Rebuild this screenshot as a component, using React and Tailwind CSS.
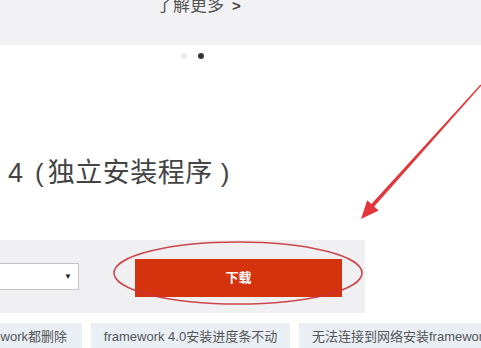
export default function App() {
  const font = { fontFamily: '"Liberation Sans", "Noto Sans CJK SC", sans-serif' }
  return (
    <div className="relative w-[481px] h-[348px] overflow-hidden bg-white" style={font}>
      {/* top band */}
      <div className="h-[45px] bg-[#f2f2f4] overflow-hidden">
        <div className="pl-[156px] -mt-[5px] flex items-center gap-[8px] text-[17px] text-[#555] leading-[22px]">
          <span>了解更多</span>
          <span className="text-[15px] font-bold text-[#444]">&gt;</span>
        </div>
      </div>

      {/* carousel dots */}
      <div className="flex gap-[11px] pl-[181px] mt-[8px]">
        <span className="w-[6px] h-[6px] rounded-full bg-[#ececf0]" />
        <span className="w-[6px] h-[6px] rounded-full bg-[#333]" />
      </div>

      {/* title */}
      <div className="pl-[8px] mt-[98px] flex items-baseline text-[27px] leading-[32px] text-[#444] whitespace-nowrap">
        <span>4</span>
        <span className="ml-[12px] text-[26px]">(</span>
        <span className="ml-[4px] tracking-[0.5px]">独立安装程序</span>
        <span className="ml-[8px] text-[26px]">)</span>
      </div>

      {/* download panel */}
      <div className="mt-[51px] w-[365px] h-[73px] bg-[#f0f0f2] flex items-start">
        <div className="mt-[23px] w-[79px] h-[27px] bg-white border border-l-0 border-[#c4c4c4] flex items-center justify-end pr-[6px]">
          <span className="text-[8px] text-[#222]">▼</span>
        </div>
        <button className="ml-[56px] mt-[19px] w-[207px] h-[38px] bg-[#d5330d] text-white text-[13px] font-bold flex items-center justify-center">
          下载
        </button>
      </div>

      {/* related tags */}
      <div className="mt-[10px] flex gap-[9px] text-[13px] text-[#555] whitespace-nowrap">
        <div className="h-[28px] -ml-[24px] w-[106px] shrink-0 bg-[#e9eff5] flex items-center justify-end pr-[15px]">framework都删除</div>
        <div className="h-[28px] w-[199px] shrink-0 bg-[#e9eff5] flex items-center justify-center">framework 4.0安装进度条不动</div>
        <div className="h-[28px] w-[200px] shrink-0 bg-[#e9eff5] flex items-center pl-[13px]">无法连接到网络安装framework</div>
      </div>

      {/* annotations */}
      <svg className="absolute inset-0 pointer-events-none" width="481" height="348" viewBox="0 0 481 348">
        <ellipse cx="238" cy="273" rx="124" ry="31" fill="none" stroke="#c8343a" strokeWidth="1.6" opacity="0.9" />
        <polygon
          points="481.5,85.4 374.2,206.6 378.6,210.6 361,219 367.2,200.2 371.4,204 480.5,84.6"
          fill="#e2363a"
        />
      </svg>
    </div>
  )
}
